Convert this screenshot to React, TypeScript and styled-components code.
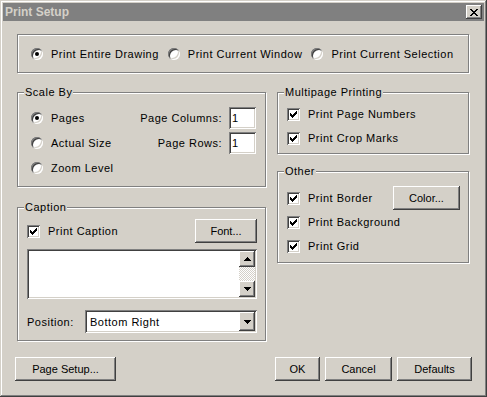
import React from 'react';
import styled, { createGlobalStyle } from 'styled-components';

const GlobalStyle = createGlobalStyle`
  html, body {
    margin: 0;
    padding: 0;
    background: #d4d0c8;
  }
  body {
    font-family: "Liberation Sans", Arial, sans-serif;
    font-size: 11px;
    letter-spacing: 0.5px;
    color: #000;
  }
`;

const raised = `
  box-shadow: inset -1px -1px 0 #404040, inset 1px 1px 0 #fff,
    inset -2px -2px 0 #808080, inset 2px 2px 0 #d4d0c8;
`;

const sunken = `
  box-shadow: inset 1px 1px 0 #808080, inset -1px -1px 0 #fff,
    inset 2px 2px 0 #404040, inset -2px -2px 0 #d4d0c8;
`;

const Window = styled.div`
  width: 487px;
  height: 397px;
  box-sizing: border-box;
  padding: 3px;
  background: #d4d0c8;
  box-shadow: inset -1px -1px 0 #404040, inset 1px 1px 0 #d4d0c8,
    inset -2px -2px 0 #808080, inset 2px 2px 0 #fff;
  display: flex;
  flex-direction: column;
`;

const TitleBar = styled.div`
  height: 18px;
  background: #808080;
  display: flex;
  align-items: center;
  justify-content: space-between;
  padding: 0 2px;
`;

const Title = styled.span`
  font-weight: bold;
  font-size: 12px;
  letter-spacing: 0;
  color: #d4d0c8;
`;

const CloseButton = styled.div`
  width: 16px;
  height: 14px;
  background: #d4d0c8;
  ${raised}
  display: flex;
  align-items: center;
  justify-content: center;
`;

const Body = styled.div`
  display: flex;
  flex-direction: column;
  padding: 13px 15px 0 14px;
`;

const Group = styled.div<{ $height: number }>`
  box-sizing: border-box;
  height: ${p => p.$height}px;
  border: 1px solid #808080;
  box-shadow: inset 1px 1px 0 #fff, 1px 1px 0 #fff;
  display: flex;
  flex-direction: column;
`;

const Legend = styled.span`
  align-self: flex-start;
  margin: -7px 0 0 6px;
  padding: 0 1px;
  line-height: 13px;
  background: #d4d0c8;
`;

const OptionsBar = styled(Group)`
  flex-direction: row;
  align-items: center;
  gap: 9px;
  padding-left: 13px;
`;

const Middle = styled.div`
  display: grid;
  grid-template-columns: 249px 192px;
  column-gap: 11px;
  margin-top: 19px;
`;

const Column = styled.div<{ $gap: number }>`
  display: flex;
  flex-direction: column;
  gap: ${p => p.$gap}px;
`;

const ScaleGrid = styled.div`
  display: grid;
  grid-template-columns: 1fr auto auto;
  grid-auto-rows: 25px;
  align-items: center;
  column-gap: 7px;
  padding: 6px 9px 0 13px;
`;

const FieldLabel = styled.span`
  text-align: right;
`;

const NumberBox = styled.input`
  width: 27px;
  height: 22px;
  box-sizing: border-box;
  border: 0;
  outline: none;
  padding: 0 3px;
  font: inherit;
  color: #000;
  background: #fff;
  ${sunken}
`;

const Stack = styled.div<{ $top: number }>`
  display: flex;
  flex-direction: column;
  padding: ${p => p.$top}px 8px 0 9px;
`;

const Row = styled.div`
  height: 24px;
  display: flex;
  align-items: center;
  justify-content: space-between;
`;

const Option = styled.label`
  display: flex;
  align-items: center;
  gap: 8px;
  white-space: nowrap;
`;

const RadioMark = styled.span<{ $on?: boolean }>`
  flex: none;
  width: 12px;
  height: 12px;
  border-radius: 50%;
  background: #fff;
  ${sunken}
  display: flex;
  align-items: center;
  justify-content: center;
  &::after {
    content: '';
    width: 4px;
    height: 4px;
    border-radius: 50%;
    background: #000;
    display: ${p => (p.$on ? 'block' : 'none')};
  }
`;

const CheckMark = styled.span`
  flex: none;
  width: 13px;
  height: 13px;
  background: #fff;
  ${sunken}
  display: flex;
`;

const Button = styled.button<{ $w: number }>`
  width: ${p => p.$w}px;
  height: 24px;
  border: 0;
  padding: 0;
  font: inherit;
  color: #000;
  background: #d4d0c8;
  ${raised}
`;

const Memo = styled.div`
  margin-top: 6px;
  height: 50px;
  box-sizing: border-box;
  padding: 2px;
  background: #fff;
  ${sunken}
  display: flex;
  justify-content: flex-end;
`;

const ScrollBar = styled.div`
  width: 16px;
  display: flex;
  flex-direction: column;
`;

const ArrowButton = styled.div<{ $w?: number; $h?: number }>`
  width: ${p => p.$w ?? 16}px;
  height: ${p => p.$h ?? 16}px;
  background: #d4d0c8;
  ${raised}
  display: flex;
  align-items: center;
  justify-content: center;
`;

const Track = styled.div`
  flex: 1;
  background: repeating-conic-gradient(#fff 0 25%, #d4d0c8 0 50%) 0 0 / 2px 2px;
`;

const PositionRow = styled.div`
  margin-top: 11px;
  display: flex;
  align-items: center;
`;

const Combo = styled.div`
  margin-left: auto;
  width: 172px;
  height: 23px;
  box-sizing: border-box;
  padding: 2px;
  background: #fff;
  ${sunken}
  display: flex;
  align-items: center;
`;

const ComboText = styled.span`
  flex: 1;
  padding-left: 3px;
`;

const Footer = styled.div`
  display: flex;
  gap: 5px;
  margin-top: 16px;
  padding: 0 12px;
`;

const Spacer = styled.div`
  flex: 1;
`;

const Radio = ({ on, children }: { on?: boolean; children: React.ReactNode }) => (
  <Option>
    <RadioMark $on={on} />
    {children}
  </Option>
);

const Check = ({ children }: { children: React.ReactNode }) => (
  <Option>
    <CheckMark>
      <svg width="13" height="13" viewBox="0 0 13 13" shapeRendering="crispEdges">
        <path
          fill="#000"
          d="M3 5h1v3H3z M4 6h1v3H4z M5 7h1v3H5z M6 6h1v3H6z M7 5h1v3H7z M8 4h1v3H8z M9 3h1v3H9z"
        />
      </svg>
    </CheckMark>
    {children}
  </Option>
);

const Arrow = ({ up }: { up?: boolean }) => (
  <svg width="7" height="4" viewBox="0 0 7 4" shapeRendering="crispEdges">
    <path
      fill="#000"
      d={up ? 'M3 0h1v1H3z M2 1h3v1H2z M1 2h5v1H1z M0 3h7v1H0z' : 'M0 0h7v1H0z M1 1h5v1H1z M2 2h3v1H2z M3 3h1v1H3z'}
    />
  </svg>
);

const App = () => {
  return (
    <>
      <GlobalStyle />
      <Window>
        <TitleBar>
          <Title>Print Setup</Title>
          <CloseButton>
            <svg width="8" height="7" viewBox="0 0 8 7" shapeRendering="crispEdges">
              <path
                fill="#000"
                d="M0 0h2v1H0z M6 0h2v1H6z M1 1h2v1H1z M5 1h2v1H5z M2 2h4v1H2z M3 3h2v1H3z M2 4h4v1H2z M1 5h2v1H1z M5 5h2v1H5z M0 6h2v1H0z M6 6h2v1H6z"
              />
            </svg>
          </CloseButton>
        </TitleBar>

        <Body>
          <OptionsBar $height={39}>
            <Radio on>Print Entire Drawing</Radio>
            <Radio>Print Current Window</Radio>
            <Radio>Print Current Selection</Radio>
          </OptionsBar>

          <Middle>
            <Column $gap={20}>
              <Group $height={95}>
                <Legend>Scale By</Legend>
                <ScaleGrid>
                  <Radio on>Pages</Radio>
                  <FieldLabel>Page Columns:</FieldLabel>
                  <NumberBox defaultValue="1" />
                  <Radio>Actual Size</Radio>
                  <FieldLabel>Page Rows:</FieldLabel>
                  <NumberBox defaultValue="1" />
                  <Radio>Zoom Level</Radio>
                </ScaleGrid>
              </Group>

              <Group $height={134}>
                <Legend>Caption</Legend>
                <Stack $top={5}>
                  <Row>
                    <Check>Print Caption</Check>
                    <Button $w={62}>Font...</Button>
                  </Row>
                  <Memo>
                    <ScrollBar>
                      <ArrowButton><Arrow up /></ArrowButton>
                      <Track />
                      <ArrowButton><Arrow /></ArrowButton>
                    </ScrollBar>
                  </Memo>
                  <PositionRow>
                    Position:
                    <Combo>
                      <ComboText>Bottom Right</ComboText>
                      <ArrowButton $w={16} $h={19}><Arrow /></ArrowButton>
                    </Combo>
                  </PositionRow>
                </Stack>
              </Group>
            </Column>

            <Column $gap={17}>
              <Group $height={62}>
                <Legend>Multipage Printing</Legend>
                <Stack $top={3}>
                  <Row><Check>Print Page Numbers</Check></Row>
                  <Row><Check>Print Crop Marks</Check></Row>
                </Stack>
              </Group>

              <Group $height={92}>
                <Legend>Other</Legend>
                <Stack $top={8}>
                  <Row>
                    <Check>Print Border</Check>
                    <Button $w={67}>Color...</Button>
                  </Row>
                  <Row><Check>Print Background</Check></Row>
                  <Row><Check>Print Grid</Check></Row>
                </Stack>
              </Group>
            </Column>
          </Middle>
        </Body>

        <Footer>
          <Button $w={101}>Page Setup...</Button>
          <Spacer />
          <Button $w={45}>OK</Button>
          <Button $w={67}>Cancel</Button>
          <Button $w={75}>Defaults</Button>
        </Footer>
      </Window>
    </>
  );
};

export default App;
